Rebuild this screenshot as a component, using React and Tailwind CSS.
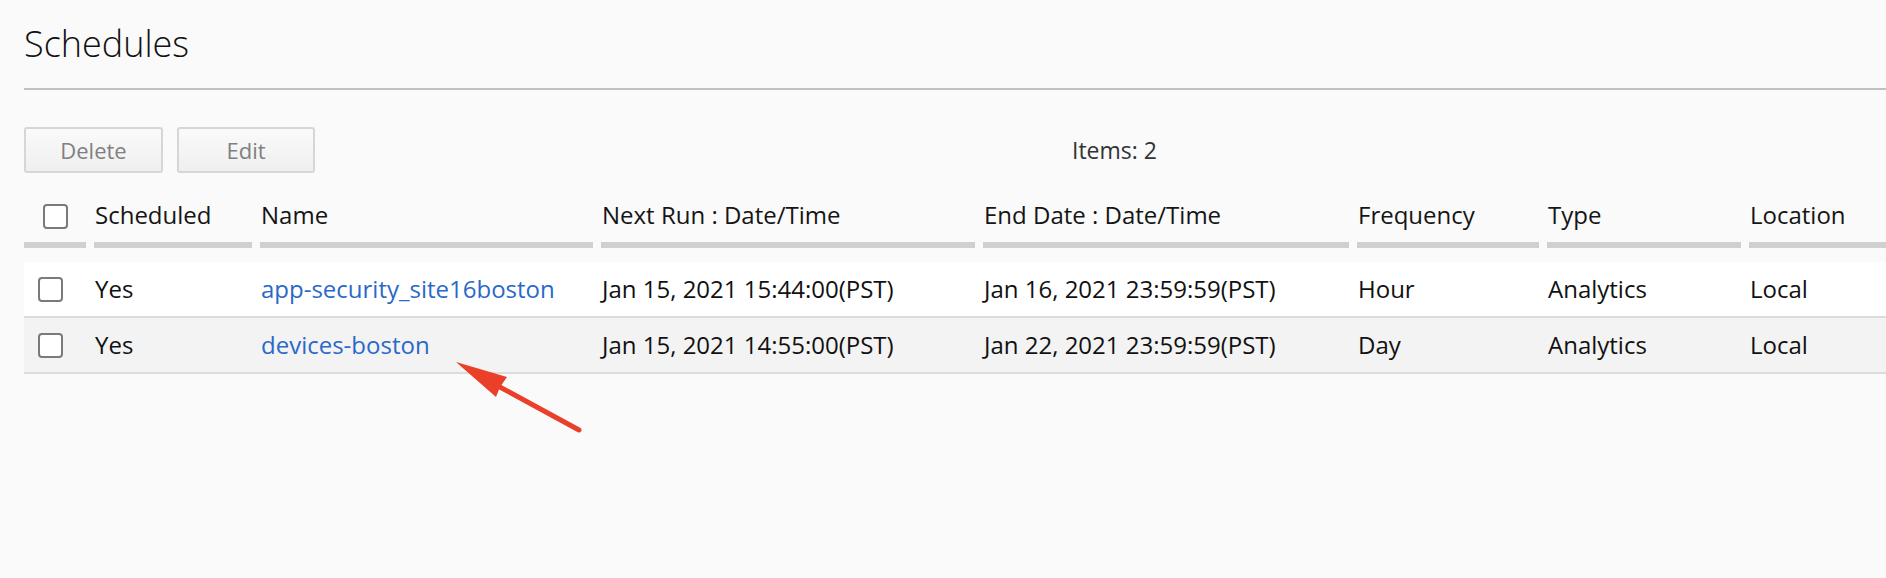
import React from "react";

const cols = "grid grid-cols-[62px_158px_333px_374px_366px_182px_194px_1fr] gap-x-[8px]";

function Box({ className = "" }) {
  return (
    <span
      className={
        "block w-[25px] h-[25px] rounded-[4px] border-2 border-[#7a7a7a] bg-white " +
        className
      }
    />
  );
}

const headers = [
  "Scheduled",
  "Name",
  "Next Run : Date/Time",
  "End Date : Date/Time",
  "Frequency",
  "Type",
  "Location",
];

const rows = [
  {
    bg: "bg-white",
    cells: [
      "Yes",
      "app-security_site16boston",
      "Jan 15, 2021 15:44:00(PST)",
      "Jan 16, 2021 23:59:59(PST)",
      "Hour",
      "Analytics",
      "Local",
    ],
  },
  {
    bg: "bg-[#f3f3f3]",
    cells: [
      "Yes",
      "devices-boston",
      "Jan 15, 2021 14:55:00(PST)",
      "Jan 22, 2021 23:59:59(PST)",
      "Day",
      "Analytics",
      "Local",
    ],
  },
];

export default function App() {
  return (
    <div
      className="relative min-h-[578px] w-full overflow-hidden bg-[#fafafa] pl-[24px] pt-[26px] text-[#111]"
      style={{ fontFamily: '"Open Sans", "Noto Sans", sans-serif' }}
    >
      <h1 className="text-[36px] font-light leading-none text-[#111]">
        Schedules
      </h1>
      <div className="mt-[26px] h-[2px] bg-[#c0c0c0]" />

      <div className="mt-[37px] flex items-center">
        <button className="h-[46px] w-[139px] rounded-[3px] border-2 border-[#d6d6d6] bg-gradient-to-b from-[#fafafa] to-[#efefef] text-[22px] leading-[22px] text-[#808080]">
          Delete
        </button>
        <button className="ml-[14px] h-[46px] w-[138px] rounded-[3px] border-2 border-[#d6d6d6] bg-gradient-to-b from-[#fafafa] to-[#efefef] text-[22px] leading-[22px] text-[#808080]">
          Edit
        </button>
        <span className="ml-[757px] text-[23px] leading-[23px] text-[#333]">Items: 2</span>
      </div>

      <div className={cols + " mt-[19px]"}>
        <div className="flex h-[56px] items-center justify-center border-b-[6px] border-[#d0d0d0] pb-[4px]">
          <Box className="mt-[3px]" />
        </div>
        {headers.map((h) => (
          <div
            key={h}
            className="flex h-[56px] items-center whitespace-nowrap border-b-[6px] border-[#d0d0d0] pb-[4px] pl-px text-[24px] leading-[24px] text-[#151515]"
          >
            {h}
          </div>
        ))}
      </div>

      <div className="mt-[14px]">
        {rows.map((r, i) => (
          <div key={i} className={cols + " h-[56px] border-b-2 border-[#dcdcdc] " + r.bg}>
            <div className="flex items-center pl-[14px]">
              <Box />
            </div>
            {r.cells.map((c, j) => (
              <div
                key={j}
                className={
                  "flex items-center whitespace-nowrap pl-px text-[24px] leading-[24px] " +
                  (j === 1 ? "text-[#2a69c9]" : "text-[#111]")
                }
              >
                {c}
              </div>
            ))}
          </div>
        ))}
      </div>

      <svg
        className="pointer-events-none absolute left-0 top-0"
        width="1886"
        height="578"
        viewBox="0 0 1886 578"
      >
        <line
          x1="498"
          y1="386"
          x2="579"
          y2="430"
          stroke="#ea3f28"
          strokeWidth="5"
          strokeLinecap="round"
        />
        <polygon points="456,362 507,377 500,387 496,397" fill="#ea3f28" />
      </svg>
    </div>
  );
}
